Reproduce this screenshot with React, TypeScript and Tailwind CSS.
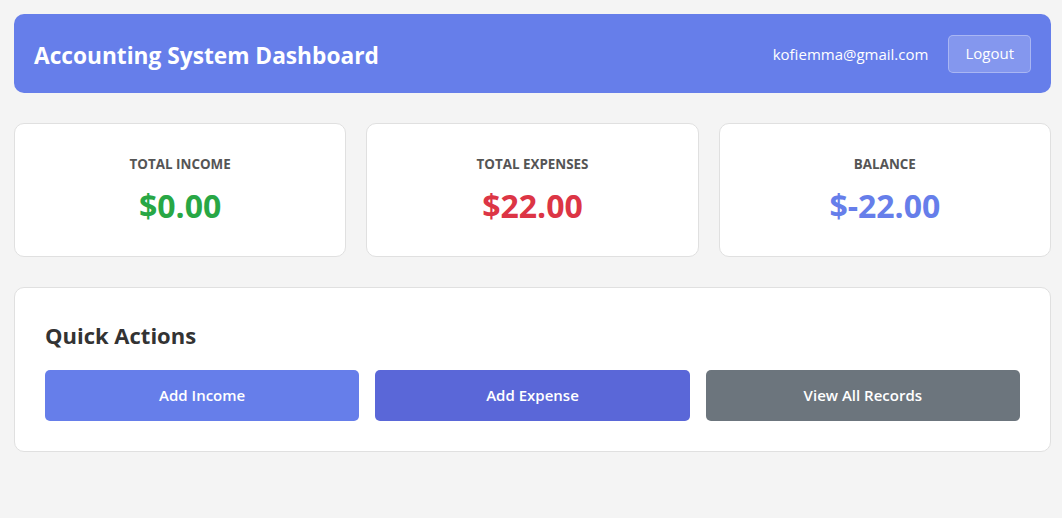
export default function App() {
  const stats = [
    { label: 'TOTAL INCOME', value: '$0.00', color: 'text-[#28a745]' },
    { label: 'TOTAL EXPENSES', value: '$22.00', color: 'text-[#dc3545]' },
    { label: 'BALANCE', value: '$-22.00', color: 'text-[#667eea]' },
  ];

  return (
    <div className="min-h-screen bg-[#f4f4f4] p-[14px] pr-[11px] font-['Open_Sans',sans-serif]">
      {/* Header */}
      <header className="flex h-[79px] items-center justify-between rounded-[10px] bg-[#667eea] px-5 text-white">
        <h1 className="pt-[5px] text-[22.7px] font-bold">Accounting System Dashboard</h1>
        <div className="flex items-center gap-5">
          <span className="pt-[2px] text-[15px]">kofiemma@gmail.com</span>
          <button className="h-[38px] rounded-[5px] border border-white/30 bg-white/20 px-4 text-[15px]">
            Logout
          </button>
        </div>
      </header>

      {/* Stats */}
      <div className="mt-[30px] grid grid-cols-3 gap-5">
        {stats.map((s) => (
          <div
            key={s.label}
            className="flex h-[134px] flex-col items-center justify-center rounded-[10px] border border-[#e0e0e0] bg-white"
          >
            <div className="text-[13.4px] font-bold text-[#555]">{s.label}</div>
            <div className={`mt-[11px] text-[32px] font-bold leading-[40px] ${s.color}`}>{s.value}</div>
          </div>
        ))}
      </div>

      {/* Quick Actions */}
      <div className="mt-[30px] rounded-[10px] border border-[#e0e0e0] bg-white px-[30px] pb-[30px] pt-[32px]">
        <h2 className="text-[22px] font-bold leading-[30px] text-[#333]">Quick Actions</h2>
        <div className="mt-[20px] grid grid-cols-3 gap-4">
          <button className="h-[51px] rounded-[5px] bg-[#667eea] text-[15px] font-semibold text-white">Add Income</button>
          <button className="h-[51px] rounded-[5px] bg-[#5a67d8] text-[15px] font-semibold text-white">Add Expense</button>
          <button className="h-[51px] rounded-[5px] bg-[#6c757d] text-[15px] font-semibold text-white">View All Records</button>
        </div>
      </div>
    </div>
  );
}
